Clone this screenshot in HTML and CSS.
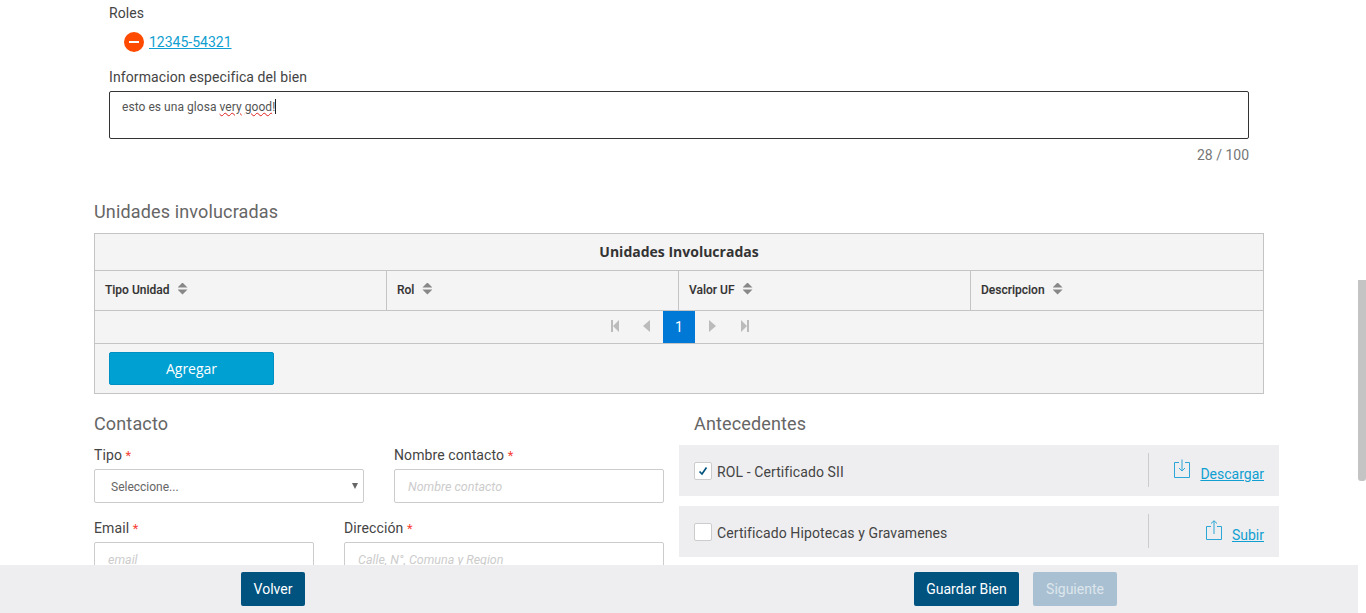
FILE: index.html
```html
<!DOCTYPE html>
<html lang="en">
<head>
    <meta charset="UTF-8">
    <title>Unidades involucradas</title>
    <link rel="stylesheet" href="styles.css">
</head>
<body>
    <div class="page">
        <section class="bien">
            <label class="field-label roles-label">Roles</label>
            <div class="role-row">
                <span class="remove-icon"><span class="remove-bar"></span></span>
                <a href="#" class="link role-link">12345-54321</a>
            </div>
            <label class="field-label glosa-label">Informacion especifica del bien</label>
            <div class="glosa">esto es una glosa <span class="typo">very</span> <span class="typo">good</span>!<span class="caret"></span></div>
            <div class="counter">28 / 100</div>
        </section>

        <h2 class="section-title unidades-title">Unidades involucradas</h2>
        <div class="grid">
            <div class="grid-title">Unidades Involucradas</div>
            <div class="grid-head">
                <div class="grid-col">Tipo Unidad <span class="sort"></span></div>
                <div class="grid-col">Rol <span class="sort"></span></div>
                <div class="grid-col">Valor UF <span class="sort"></span></div>
                <div class="grid-col">Descripcion <span class="sort"></span></div>
            </div>
            <div class="pager">
                <svg class="pager-icon pager-first" viewBox="0 0 8 12"><path d="M0 0h2v12H0zM8 0v12L2 6z"/></svg>
                <svg class="pager-icon pager-prev" viewBox="0 0 7 12"><path d="M7 0v12L0 6z"/></svg>
                <span class="page-num">1</span>
                <svg class="pager-icon pager-next" viewBox="0 0 7 12"><path d="M0 0v12l7-6z"/></svg>
                <svg class="pager-icon pager-last" viewBox="0 0 8 12"><path d="M8 0H6v12h2zM0 0v12l6-6z"/></svg>
            </div>
            <div class="grid-foot">
                <button class="btn-add">Agregar</button>
            </div>
        </div>

        <div class="columns">
            <section class="contacto">
                <h2 class="section-title">Contacto</h2>
                <div class="form-row">
                    <div class="field tipo">
                        <label class="field-label">Tipo <span class="req">*</span></label>
                        <div class="select">Seleccione...<span class="select-arrow"></span></div>
                    </div>
                    <div class="field nombre">
                        <label class="field-label">Nombre contacto <span class="req">*</span></label>
                        <div class="input">Nombre contacto</div>
                    </div>
                </div>
                <div class="form-row email-row">
                    <div class="field email">
                        <label class="field-label">Email <span class="req">*</span></label>
                        <div class="input">email</div>
                    </div>
                    <div class="field direccion">
                        <label class="field-label">Dirección <span class="req">*</span></label>
                        <div class="input">Calle, N°, Comuna y Region</div>
                    </div>
                </div>
            </section>

            <section class="antecedentes">
                <h2 class="section-title">Antecedentes</h2>
                <div class="doc">
                    <span class="check"><svg viewBox="0 0 12 12"><path d="M2.5 6.5 5 9l4.5-6.5" fill="none" stroke="#00527f" stroke-width="1.7"/></svg></span>
                    <span class="doc-name">ROL - Certificado SII</span>
                    <div class="doc-action">
                        <svg class="doc-icon" viewBox="0 0 16 20"><path d="M5 3.5H.5v15h15v-15H11M8 .5V12M5 9l3 3 3-3" fill="none" stroke="#2ba6d6"/></svg>
                        <a href="#" class="link">Descargar</a>
                    </div>
                </div>
                <div class="doc">
                    <span class="check"></span>
                    <span class="doc-name">Certificado Hipotecas y Gravamenes</span>
                    <div class="doc-action">
                        <svg class="doc-icon" viewBox="0 0 16 20"><path d="M5 6.5H.5v13h15v-13H11M8 14V.8M5 3.5 8 .8l3 2.7" fill="none" stroke="#2ba6d6"/></svg>
                        <a href="#" class="link">Subir</a>
                    </div>
                </div>
            </section>
        </div>
    </div>

    <div class="footer">
        <button class="btn btn-volver">Volver</button>
        <button class="btn btn-guardar">Guardar Bien</button>
        <button class="btn btn-disabled">Siguiente</button>
    </div>

    <div class="scroll-thumb"></div>
</body>
</html>
```

FILE: styles.css
```css
/* General */
html, body {
    margin: 0;
    height: 613px;
    overflow: hidden;
    background: #fff;
}

body {
    font-family: 'Roboto', sans-serif;
    font-size: 14px;
    color: #444;
}

.page {
    width: 1358px;
    box-sizing: border-box;
    padding-left: 94px;
}

.field-label {
    display: block;
    font-size: 14px;
    line-height: 18px;
    letter-spacing: 0.1px;
    color: #444;
}

.link {
    color: #0f9fd0;
    text-decoration: underline;
}

.req {
    color: #f44336;
    font-size: 13px;
}

.section-title {
    margin: 0;
    font-size: 18px;
    font-weight: 400;
    line-height: 24px;
    letter-spacing: 0.15px;
    color: #666;
}

/* Roles y glosa */
.bien {
    padding: 4px 0 0 15px;
    width: 1140px;
}

.role-row {
    display: flex;
    align-items: center;
    margin: 10px 0 0 15px;
    height: 20px;
}

.remove-icon {
    display: flex;
    align-items: center;
    justify-content: center;
    width: 20px;
    height: 20px;
    border-radius: 50%;
    background: #ff4a00;
}

.remove-bar {
    width: 10px;
    height: 1.5px;
    background: #fff;
}

.role-link {
    margin-left: 5px;
}

.glosa-label {
    margin-top: 16px;
}

.glosa {
    box-sizing: border-box;
    height: 48px;
    margin-top: 5px;
    padding: 7px 12px;
    border: 1px solid #333;
    border-radius: 2px;
    font-size: 12px;
    line-height: 16px;
    letter-spacing: 0.05px;
    color: #555;
}

.typo {
    text-decoration: underline wavy #e02020 1px;
}

.caret {
    display: inline-block;
    width: 1px;
    height: 15px;
    background: #222;
    vertical-align: -3px;
}

.counter {
    margin-top: 8px;
    text-align: right;
    font-size: 14px;
    line-height: 16px;
    color: #777;
}

.unidades-title {
    margin-top: 37px;
}

/* Tabla */
.grid {
    width: 1170px;
    box-sizing: border-box;
    margin-top: 9px;
    border: 1px solid #c4c4c4;
    background: #f4f4f4;
}

.grid-title {
    height: 36px;
    border-bottom: 1px solid #c4c4c4;
    font-family: 'Open Sans', sans-serif;
    font-size: 14px;
    font-weight: 700;
    line-height: 36px;
    text-align: center;
    color: #333;
}

.grid-head {
    display: grid;
    grid-template-columns: repeat(4, 1fr);
    height: 39px;
    border-bottom: 1px solid #c4c4c4;
}

.grid-col {
    display: flex;
    align-items: center;
    gap: 8px;
    padding: 0 0 2px 10px;
    border-right: 1px solid #c4c4c4;
    font-size: 12px;
    font-weight: 500;
    color: #333;
    -webkit-text-stroke: 0.1px #333;
}

.grid-col:last-child {
    border-right: none;
}

.sort {
    position: relative;
    top: -1px;
    width: 10px;
    height: 12px;
    background: #888;
    clip-path: polygon(50% 0, 100% 42%, 0 42%, 0 58%, 100% 58%, 50% 100%, 0 58%, 0 42%);
}

.pager {
    display: flex;
    align-items: center;
    justify-content: center;
    box-sizing: border-box;
    height: 33px;
    padding-left: 2px;
    border-bottom: 1px solid #c4c4c4;
}

.pager-icon {
    width: 8px;
    height: 12px;
    margin-bottom: 2px;
    fill: #bbb;
}

.pager-first {
    margin-right: 24px;
}

.pager-prev {
    width: 7px;
    margin-right: 13px;
}

.pager-next {
    width: 7px;
    margin: 0 25px 2px 14px;
}

.page-num {
    width: 32px;
    height: 32px;
    background: #0079d6;
    color: #fff;
    text-align: center;
    line-height: 32px;
}

.grid-foot {
    height: 49px;
    padding: 8px 14px;
    box-sizing: border-box;
}

.btn-add {
    display: block;
    width: 165px;
    height: 33px;
    padding: 0;
    border: 1px solid #0091c4;
    border-radius: 2px;
    background: #00a0d2;
    color: #fff;
    font-family: 'Open Sans', sans-serif;
    font-size: 14px;
}

/* Contacto y antecedentes */
.columns {
    display: flex;
    margin-top: 18px;
}

.contacto {
    width: 570px;
    margin-right: 15px;
}

.form-row {
    display: flex;
    justify-content: space-between;
    margin-top: 10px;
}

.email-row {
    margin-top: 16px;
}

.tipo {
    width: 270px;
}

.nombre {
    width: 270px;
}

.email {
    width: 220px;
}

.direccion {
    width: 320px;
}

.select, .input {
    position: relative;
    box-sizing: border-box;
    height: 34px;
    margin-top: 4px;
    padding-left: 13px;
    border: 1px solid #ccc;
    border-radius: 2px;
    font-size: 12.5px;
    line-height: 34px;
    color: #ccc;
    font-style: italic;
}

.select {
    padding-left: 16px;
    font-size: 12px;
    font-style: normal;
    color: #666;
}

.select-arrow {
    position: absolute;
    right: 5px;
    top: 13px;
    border-left: 3px solid transparent;
    border-right: 3px solid transparent;
    border-top: 6px solid #666;
}

.antecedentes {
    width: 600px;
}

.antecedentes .section-title {
    padding-left: 15px;
}

.doc {
    display: flex;
    align-items: center;
    height: 51px;
    margin-top: 10px;
    padding-left: 15px;
    background: #eeeef0;
}

.antecedentes .section-title + .doc {
    margin-top: 9px;
}

.check {
    box-sizing: border-box;
    display: flex;
    align-items: center;
    justify-content: center;
    width: 18px;
    height: 18px;
    border: 1px solid #ccc;
    border-radius: 2px;
    background: #fff;
}

.check svg {
    width: 12px;
    height: 12px;
}

.doc-name {
    flex: 1;
    margin-left: 5px;
    padding-top: 2px;
    letter-spacing: 0.1px;
    color: #444;
}

.doc-action {
    display: flex;
    align-items: center;
    justify-content: flex-end;
    gap: 10px;
    width: 115px;
    height: 34px;
    margin-bottom: 2px;
    padding-right: 15px;
    border-left: 1px solid #ccc;
}

.doc-action .link {
    position: relative;
    top: 4px;
}

.doc-icon {
    width: 16px;
    height: 20px;
    position: relative;
    top: -1px;
}

/* Barra inferior */
.footer {
    position: fixed;
    left: 0;
    bottom: 0;
    display: flex;
    align-items: center;
    box-sizing: border-box;
    width: 1358px;
    height: 48px;
    padding-left: 241px;
    background: #eeeef0;
}

.btn {
    height: 34px;
    padding: 0;
    border: none;
    border-radius: 2px;
    font-family: 'Roboto', sans-serif;
    font-size: 14px;
    color: #fff;
    background: #00527f;
}

.btn-volver {
    width: 64px;
    margin-right: 609px;
}

.btn-guardar {
    width: 105px;
    margin-right: 14px;
}

.btn-disabled {
    width: 84px;
    background: #a9c0d2;
    color: #dde6ec;
}

.scroll-thumb {
    position: fixed;
    right: 0;
    top: 280px;
    width: 8px;
    height: 201px;
    border-radius: 0 0 3px 3px;
    background: #c4c4c4;
}
```
